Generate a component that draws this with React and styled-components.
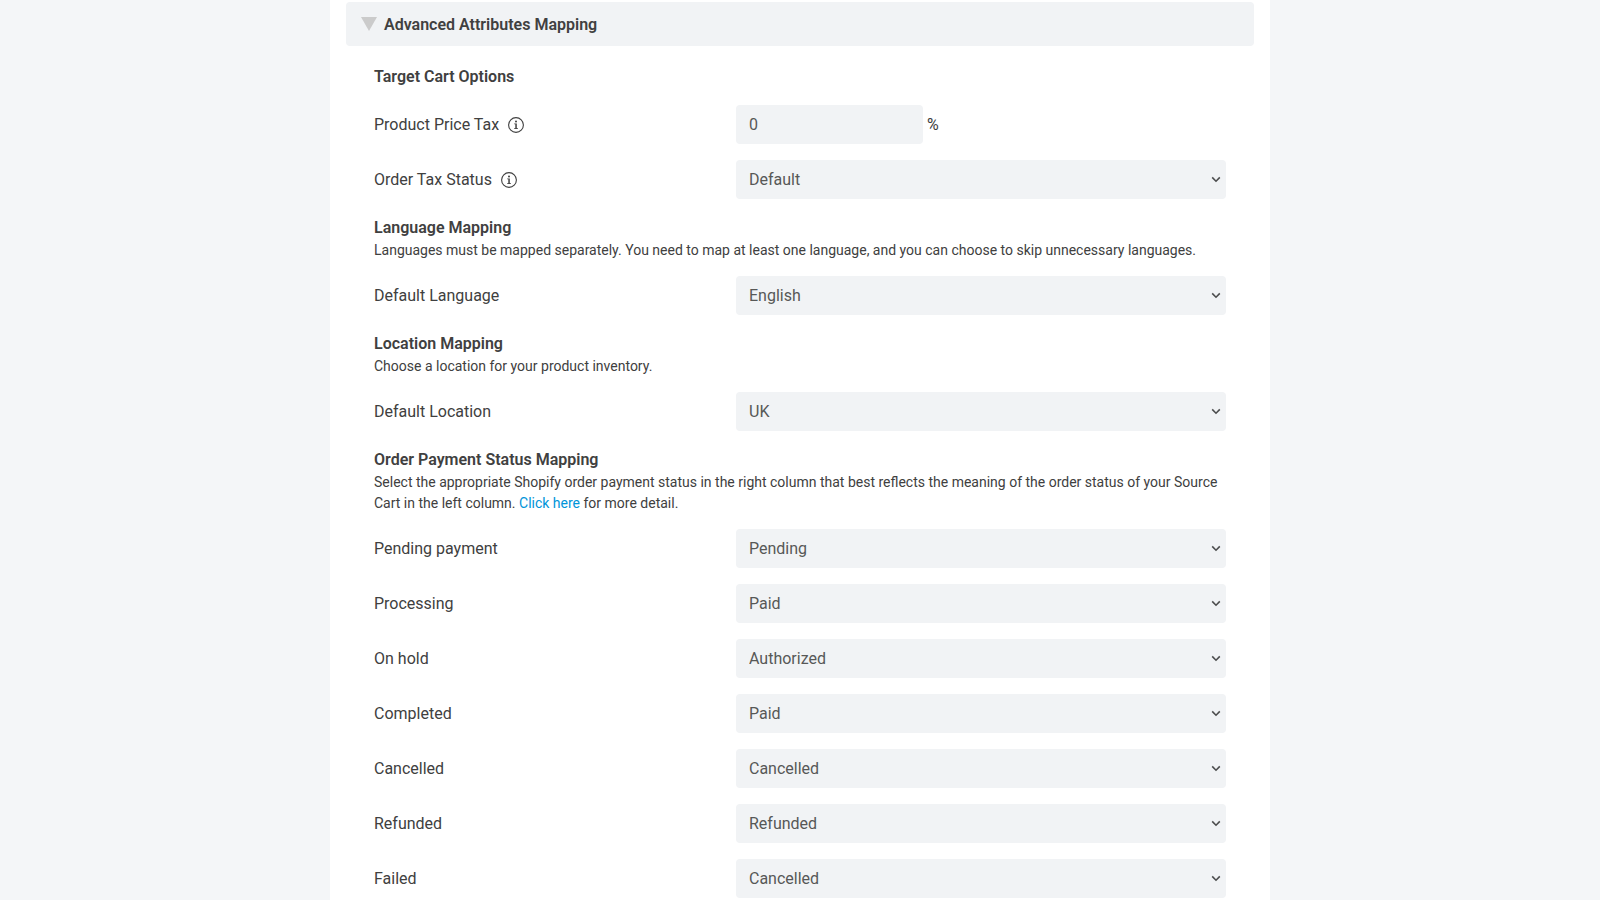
import React from 'react';
import styled, { createGlobalStyle } from 'styled-components';

const textColor = '#404040';
const fieldColor = '#f1f3f5';
const fieldTextColor = '#575857';
const linkColor = '#0094d9';

const orderStatuses = [
    ['Pending payment', 'Pending'],
    ['Processing', 'Paid'],
    ['On hold', 'Authorized'],
    ['Completed', 'Paid'],
    ['Cancelled', 'Cancelled'],
    ['Refunded', 'Refunded'],
    ['Failed', 'Cancelled'],
];

const paymentOptions = ['Pending', 'Authorized', 'Paid', 'Refunded', 'Cancelled'];

const GlobalStyle = createGlobalStyle`
    * {
        box-sizing: border-box;
    }

    body {
        margin: 0;
        background: #f4f6f8;
        color: ${textColor};
        font-family: Roboto, sans-serif;
        font-size: 16px;
        line-height: 24px;
    }
`;

const Panel = styled.main`
    max-width: 940px;
    margin: 0 auto;
    padding: 2px 16px;
    background: #fff;
`;

const SectionToggle = styled.button`
    display: flex;
    align-items: center;
    gap: 7px;
    width: 100%;
    height: 44px;
    padding: 2px 15px 0;
    border: 0;
    border-radius: 4px;
    background: ${fieldColor};
    color: inherit;
    font: inherit;
    font-weight: 600;
    cursor: pointer;
`;

const SectionBody = styled.div`
    padding: 19px 28px 0;
`;

const Title = styled.h3`
    margin: 0;
    font-size: 16px;
    font-weight: 600;
`;

const FirstTitle = styled(Title)`
    margin-bottom: 8px;
`;

const Intro = styled.div`
    margin: 9px 0 7px;
`;

const Description = styled.p`
    margin: 0;
    font-size: 14px;
    line-height: 21px;
`;

const Anchor = styled.a`
    color: ${linkColor};
    text-decoration: none;
`;

const Row = styled.div`
    display: grid;
    grid-template-columns: 362px minmax(0, 1fr);
    align-items: center;
    padding: 8px 0;
`;

const Label = styled.label`
    display: flex;
    align-items: center;
    gap: 9px;
`;

const Field = styled.div`
    display: flex;
    align-items: center;
    gap: 4px;
`;

const TextInput = styled.input`
    width: 187px;
    height: 39px;
    padding: 0 13px;
    border: 0;
    border-radius: 4px;
    background: ${fieldColor};
    color: ${fieldTextColor};
    font: inherit;
`;

const SelectBox = styled.div`
    display: grid;
    align-items: center;

    & > * {
        grid-area: 1 / 1;
    }

    & > svg {
        justify-self: end;
        margin-right: 5px;
        pointer-events: none;
    }
`;

const Select = styled.select`
    width: 100%;
    height: 39px;
    padding: 0 24px 0 13px;
    border: 0;
    border-radius: 4px;
    background: ${fieldColor};
    color: ${fieldTextColor};
    font: inherit;
    appearance: none;
`;

function Triangle() {
    return (
        <svg width="16" height="16" viewBox="0 0 16 16" aria-hidden="true">
            <path d="M0 0h16L8 14z" fill="#cbcbcb" />
        </svg>
    );
}

function Chevron() {
    return (
        <svg width="10" height="7" viewBox="0 0 10 7" aria-hidden="true">
            <path d="M1.2 1.4L5 5.2l3.8-3.8" fill="none" stroke="#4c4d4e" strokeWidth="1.6" />
        </svg>
    );
}

function InfoIcon() {
    return (
        <svg width="16" height="16" viewBox="0 0 16 16" aria-hidden="true">
            <circle cx="8" cy="8" r="7.4" fill="none" stroke={textColor} strokeWidth="1.1" />
            <circle cx="8" cy="4.5" r="1" fill={textColor} />
            <path d="M6.2 6.5h2.6v4.7h1.2v.8H6.1v-.8h1.2V7.3H6.2z" fill={textColor} />
        </svg>
    );
}

function SelectRow({ id, label, value, options = [value], info }) {
    return (
        <Row>
            <Label htmlFor={id}>{label}{info && <InfoIcon />}</Label>
            <SelectBox>
                <Select id={id} defaultValue={value}>
                    {options.map(option => <option key={option}>{option}</option>)}
                </Select>
                <Chevron />
            </SelectBox>
        </Row>
    );
}

export default function App() {
    return (
        <>
            <GlobalStyle />
            <Panel>
                <SectionToggle type="button" aria-expanded="true">
                    <Triangle />
                    Advanced Attributes Mapping
                </SectionToggle>
                <SectionBody>
                    <FirstTitle>Target Cart Options</FirstTitle>
                    <Row>
                        <Label htmlFor="price-tax">Product Price Tax<InfoIcon /></Label>
                        <Field>
                            <TextInput id="price-tax" type="text" defaultValue="0" />
                            <span>%</span>
                        </Field>
                    </Row>
                    <SelectRow id="order-tax" label="Order Tax Status" value="Default" info />
                    <Intro>
                        <Title>Language Mapping</Title>
                        <Description>
                            Languages must be mapped separately. You need to map at least one language, and you can choose to skip unnecessary languages.
                        </Description>
                    </Intro>
                    <SelectRow id="language" label="Default Language" value="English" />
                    <Intro>
                        <Title>Location Mapping</Title>
                        <Description>Choose a location for your product inventory.</Description>
                    </Intro>
                    <SelectRow id="location" label="Default Location" value="UK" />
                    <Intro>
                        <Title>Order Payment Status Mapping</Title>
                        <Description>
                            Select the appropriate Shopify order payment status in the right column that best reflects the meaning of the order status of your Source Cart in the left column. <Anchor href="#order-status">Click here</Anchor> for more detail.
                        </Description>
                    </Intro>
                    {orderStatuses.map(([label, value]) => (
                        <SelectRow
                            key={label}
                            id={`status-${label.toLowerCase().replace(' ', '-')}`}
                            label={label}
                            value={value}
                            options={paymentOptions}
                        />
                    ))}
                </SectionBody>
            </Panel>
        </>
    );
}
